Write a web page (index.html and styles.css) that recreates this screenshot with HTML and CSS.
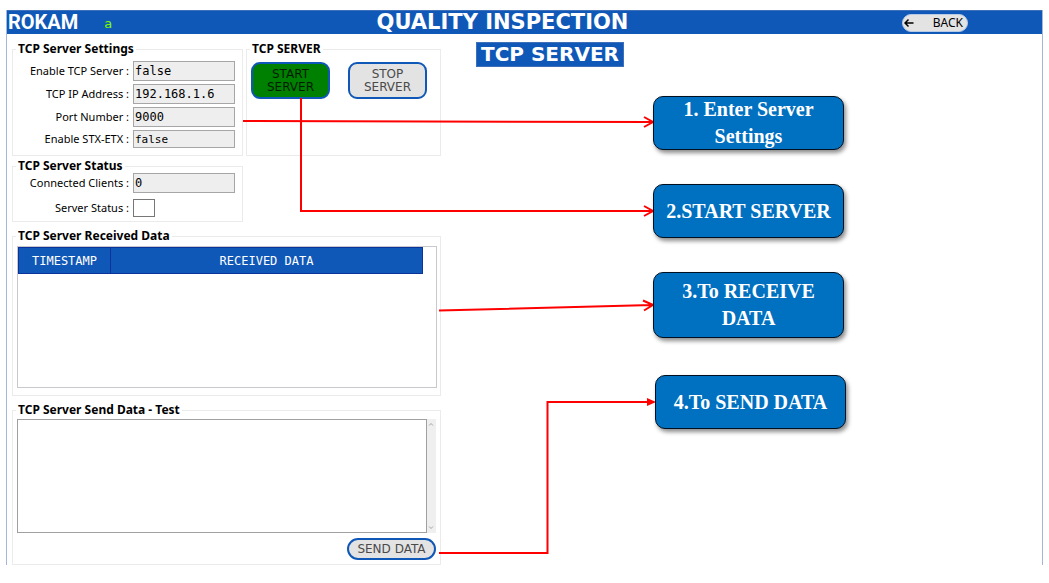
FILE: index.html
```html
<!DOCTYPE html>
<html lang="en">
<head>
<meta charset="utf-8">
<title>Quality Inspection - TCP Server</title>
<link rel="stylesheet" href="styles.css">
</head>
<body>
<div class="app">
  <header class="topbar">
    <div class="brand"><span class="logo">ROKAM</span><span class="user">a</span></div>
    <h1 class="title">QUALITY INSPECTION</h1>
    <button class="back" type="button">
      <svg class="back-icon" viewBox="0 0 10 10" aria-hidden="true"><path d="M9.500 5H1M4.500 1.500L1 5l3.500 3.500"/></svg>
      <span>BACK</span>
    </button>
  </header>
  <main class="content">
    <div class="panels">
      <div class="top-row">
        <fieldset class="panel settings">
          <legend>TCP Server Settings</legend>
          <div class="field"><label for="enable">Enable TCP Server :</label><input id="enable" type="text" value="false" readonly></div>
          <div class="field"><label for="ip">TCP IP Address :</label><input id="ip" type="text" value="192.168.1.6" readonly></div>
          <div class="field"><label for="port">Port Number :</label><input id="port" type="text" value="9000" readonly></div>
          <div class="field"><label for="stx">Enable STX-ETX :</label><input id="stx" class="small" type="text" value="false" readonly></div>
        </fieldset>
        <fieldset class="panel control">
          <legend>TCP SERVER</legend>
          <div class="actions">
            <button class="btn start" type="button">START SERVER</button>
            <button class="btn" type="button">STOP SERVER</button>
          </div>
        </fieldset>
      </div>
      <fieldset class="panel status">
        <legend>TCP Server Status</legend>
        <div class="field"><label for="clients">Connected Clients :</label><input id="clients" type="text" value="0" readonly></div>
        <div class="field"><label for="state">Server Status :</label><input id="state" class="lamp" type="text" readonly></div>
      </fieldset>
      <fieldset class="panel received">
        <legend>TCP Server Received Data</legend>
        <div class="list">
          <table class="grid">
            <thead><tr><th class="time" scope="col">TIMESTAMP</th><th scope="col">RECEIVED DATA</th></tr></thead>
          </table>
        </div>
      </fieldset>
      <fieldset class="panel send">
        <legend>TCP Server Send Data - Test</legend>
        <div class="editor">
          <textarea class="message" aria-label="Data to send"></textarea>
          <div class="scroll" aria-hidden="true">
            <svg viewBox="0 0 8 8"><path d="M2 5.500l2-2 2 2"/></svg>
            <svg viewBox="0 0 8 8"><path d="M2 2.500l2 2 2-2"/></svg>
          </div>
        </div>
        <button class="btn pill" type="button">SEND DATA</button>
      </fieldset>
    </div>
    <h2 class="page-name">TCP SERVER</h2>
  </main>
</div>
<div class="notes">
  <svg class="arrows" width="900" height="583" viewBox="0 0 900 583" aria-hidden="true">
    <path d="M243 121L652 122M644 117l9 5-9 5"/>
    <path d="M301 98V211H652M644 206l9 5-9 5"/>
    <path d="M439 310.500L652 305M643 300.500l10 4.500-9 5.500"/>
    <path d="M439 553H547.500V402H650"/>
    <path class="tip" d="M647 398l9 4-9 4z"/>
  </svg>
  <div class="note n1">1. Enter Server<br>Settings</div>
  <div class="note n2">2.START SERVER</div>
  <div class="note n3">3.To RECEIVE<br>DATA</div>
  <div class="note n4">4.To SEND DATA</div>
</div>
</body>
</html>
```
FILE: styles.css
```css
* { box-sizing: border-box; }

body {
  margin: 0;
  background: #fff;
  color: #000;
  font: 12px/14px "Noto Sans", sans-serif;
}

h1, h2 { margin: 0; font: bold 20px/22px "DejaVu Sans", sans-serif; color: #fff; }
button, input, textarea { font: inherit; color: inherit; }

.app {
  margin: 10px 6px 17px;
  border: solid #a3b8d6;
  border-width: 0 1px;
}

/* Header */
.topbar {
  display: grid;
  grid-template-columns: 1fr auto 1fr;
  align-items: center;
  height: 24px;
  padding-right: 44px;
  background: #1058b7;
  border-top: 1px solid #3d70b8;
}
.title { font-size: 21px; line-height: 23px; }
.brand { display: flex; align-items: center; gap: 26px; padding-left: 1px; }
.logo { color: #fff; font: bold 20px/23px Roboto, sans-serif; }
.user { color: #7cfc00; font: 13px/20px "DejaVu Sans", sans-serif; padding-top: 3px; }
.back {
  justify-self: end;
  display: flex;
  align-items: center;
  justify-content: space-between;
  width: 66px;
  height: 18px;
  margin-right: 30px;
  padding: 0 4px 0 1px;
  border: 1px solid #b9cbe4;
  border-radius: 9px;
  background: #e3e3e3;
  font: 12px/16px "Noto Sans", sans-serif;
}
.back-icon { width: 10px; height: 10px; fill: none; stroke: #000; stroke-width: 1.5; }

/* Panels */
.content { display: flex; align-items: flex-start; gap: 35px; padding: 8px 5px 0; }
.panels { flex: 0 0 429px; }
.top-row { display: flex; align-items: stretch; gap: 3px; }
.settings, .status { width: 231px; }
.panel { margin: 0; padding: 0 4px; border: 1px solid #ebebeb; min-width: 0; }
.panel legend { padding: 0 2px; margin-left: -1px; font-weight: bold; }
.panel.settings { padding: 5px 7px 7px 4px; }
.control { flex: 1; }
.panel.status { margin-top: 3px; padding: 0 7px 4px 4px; }
.panel.received { margin-top: 7px; padding-bottom: 7px; }
.panel.send { margin-top: 7px; padding-top: 2px; padding-bottom: 4px; }

.field { display: grid; grid-template-columns: 1fr 102px; gap: 4px; margin-bottom: 3px; }
.field:last-child { margin-bottom: 0; }
.field label { justify-self: end; align-self: center; font-size: 11px; }
.field input {
  width: 102px;
  height: 20px;
  padding: 0 1px;
  border: 1px solid #a6a6a6;
  background: #eee;
  font: 12px/16px "DejaVu Sans Mono", monospace;
}
.field .small { height: 18px; font-size: 11px; }
.field .lamp { width: 22px; height: 18px; background: #fff; border-color: #777; }
.status .field { margin-bottom: 6px; }
.status .field:last-child { margin-bottom: 0; }

/* Buttons */
.actions { display: flex; gap: 18px; padding-top: 6px; }
.btn {
  width: 79px;
  height: 37px;
  padding: 0 8px;
  border: 2px solid #1058b7;
  border-radius: 9px;
  background: #e3e3e3;
  color: #4a4a4a;
  font: 12px/13px "DejaVu Sans", sans-serif;
}
.start { background: #008000; color: #001c00; }
.pill { display: block; width: 89px; height: 22px; margin: 5px 0 0 auto; padding: 0; border-radius: 11px; }

/* Received data */
.list { height: 142px; border: 1px solid #c9c9cd; margin-top: 3px; margin-right: -1px; padding-right: 13px; }
.grid { width: 100%; border-collapse: collapse; table-layout: fixed; }
.grid th {
  height: 26px;
  padding: 0;
  border: 1px solid #0a349c;
  background: #1058b7;
  color: #fff;
  font: 12px/14px "DejaVu Sans Mono", monospace;
}
.grid .time { width: 92px; }

/* Send data */
.editor { display: flex; height: 114px; }
.message { flex: 1; min-width: 0; border: 1px solid #a0a0a0; padding: 2px; resize: none; overflow: hidden; background: #fff; }
.scroll { display: flex; flex-direction: column; justify-content: space-between; width: 9px; padding: 1px 0; background: #efefef; }
.scroll svg { width: 8px; height: 8px; fill: none; stroke: #a5a5a5; }

.page-name { padding: 0 4px; background: #1058b7; border: 1px solid #3d70b8; line-height: 23px; }

/* Annotations drawn over the screen */
.notes { position: absolute; top: 0; left: 0; pointer-events: none; }
.arrows { display: block; fill: none; stroke: #f00; stroke-width: 2; }
.arrows .tip { fill: #f00; stroke: none; }
.note {
  position: absolute;
  left: 653px;
  display: flex;
  align-items: center;
  justify-content: center;
  width: 191px;
  height: 54px;
  border: 1px solid #001020;
  border-radius: 10px;
  background: #0070c0;
  box-shadow: 2px 3px 4px rgba(0, 0, 0, 0.45);
  color: #fff;
  font: bold 20px/27px "Liberation Serif", serif;
  text-align: center;
}
.n1 { top: 96px; }
.n2 { top: 184px; }
.n3 { top: 272px; height: 66px; }
.n4 { top: 375px; left: 655px; }
```
